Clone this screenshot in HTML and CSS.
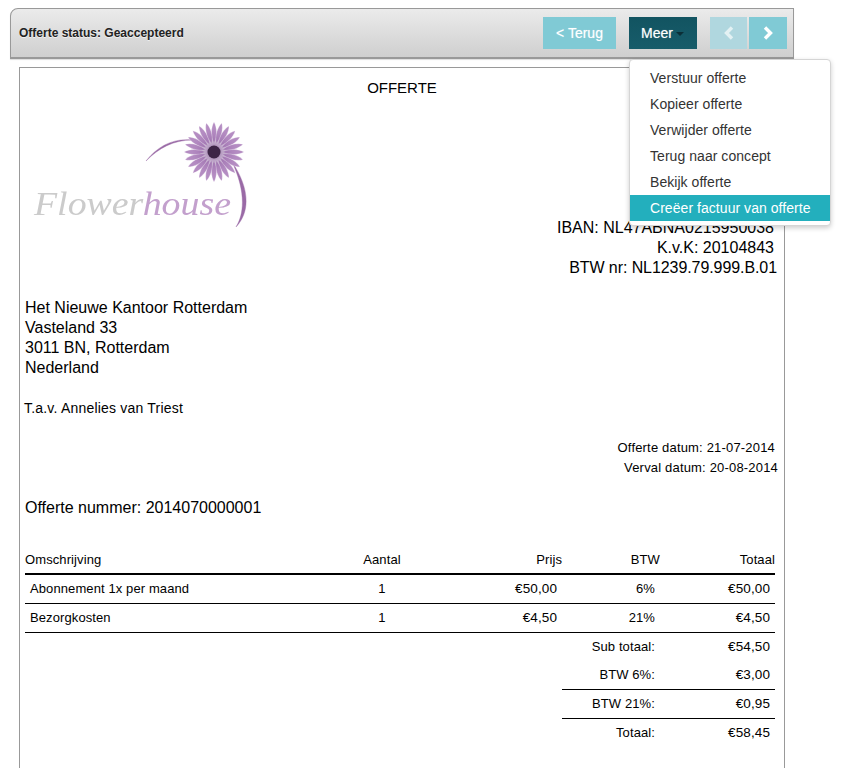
FILE: index.html
```html
<!DOCTYPE html>
<html lang="nl">
<head>
<meta charset="utf-8">
<title>Offerte</title>
<link rel="stylesheet" href="styles.css">
</head>
<body>
<header class="toolbar">
  <div class="status">Offerte status: Geaccepteerd</div>
  <div class="actions">
    <a class="btn btn-light btn-back">&lt; Terug</a>
    <div class="more">
      <a class="btn btn-dark">Meer<span class="caret"></span></a>
      <ul class="menu">
        <li>Verstuur offerte</li>
        <li>Kopieer offerte</li>
        <li>Verwijder offerte</li>
        <li>Terug naar concept</li>
        <li>Bekijk offerte</li>
        <li class="active">Creëer factuur van offerte</li>
      </ul>
    </div>
    <div class="pager">
      <a class="btn btn-light btn-page disabled"><svg width="12" height="14" viewBox="0 0 12 14"><polyline points="9,1.5 3.5,7 9,12.5" class="chev"/></svg></a>
      <a class="btn btn-light btn-page"><svg width="12" height="14" viewBox="0 0 12 14"><polyline points="3,1.5 8.5,7 3,12.5" class="chev"/></svg></a>
    </div>
  </div>
</header>
<main class="doc">
  <h1 class="title">OFFERTE</h1>
  <section class="head">
    <svg class="logo" width="230" height="130" viewBox="0 0 230 130">
      <defs>
        <g id="p"><path d="M0 -9 C-3.6 -16 -3 -25 0 -30 C3 -25 3.6 -16 0 -9Z"/></g>
        <radialGradient id="shade">
          <stop offset="0" stop-color="#6d3f82" stop-opacity=".85"/>
          <stop offset=".55" stop-color="#8d5ea0" stop-opacity=".35"/>
          <stop offset="1" stop-color="#a87bb8" stop-opacity="0"/>
        </radialGradient>
      </defs>
      <path d="M125 52 C137 37 152 29 172 31 C152 31 138 39 125 52Z" class="arc"/>
      <path d="M211 53 C228 78 230 102 215 118 C225 102 223 78 211 53Z" class="arc"/>
      <g transform="translate(193 43)">
        <g class="petals">
          <use href="#p" transform="rotate(0)"/><use href="#p" transform="rotate(15)"/><use href="#p" transform="rotate(30)"/><use href="#p" transform="rotate(45)"/><use href="#p" transform="rotate(60)"/><use href="#p" transform="rotate(75)"/><use href="#p" transform="rotate(90)"/><use href="#p" transform="rotate(105)"/><use href="#p" transform="rotate(120)"/><use href="#p" transform="rotate(135)"/><use href="#p" transform="rotate(150)"/><use href="#p" transform="rotate(165)"/><use href="#p" transform="rotate(180)"/><use href="#p" transform="rotate(195)"/><use href="#p" transform="rotate(210)"/><use href="#p" transform="rotate(225)"/><use href="#p" transform="rotate(240)"/><use href="#p" transform="rotate(255)"/><use href="#p" transform="rotate(270)"/><use href="#p" transform="rotate(285)"/><use href="#p" transform="rotate(300)"/><use href="#p" transform="rotate(315)"/><use href="#p" transform="rotate(330)"/><use href="#p" transform="rotate(345)"/>
        </g>
        <circle r="24" fill="url(#shade)"/>
        <circle r="6.5" class="eye"/>
      </g>
      <text x="13" y="106" class="wordmark" textLength="197" lengthAdjust="spacingAndGlyphs"><tspan class="w1">Flower</tspan><tspan class="w2">house</tspan></text>
    </svg>
    <div class="company">
      <div class="line">IBAN: NL47ABNA0215950038</div>
      <div class="line">K.v.K: 20104843</div>
      <div class="line line-wide">BTW nr: NL1239.79.999.B.01</div>
    </div>
  </section>
  <address class="client">
    <div>Het Nieuwe Kantoor Rotterdam</div>
    <div>Vasteland 33</div>
    <div>3011 BN, Rotterdam</div>
    <div>Nederland</div>
  </address>
  <p class="attn">T.a.v. Annelies van Triest</p>
  <div class="dates">
    <div>Offerte datum: 21-07-2014</div>
    <div class="due">Verval datum: 20-08-2014</div>
  </div>
  <p class="number">Offerte nummer: 2014070000001</p>
  <table class="items">
    <colgroup>
      <col class="c1"><col class="c2"><col class="c3"><col class="c4"><col class="c5">
    </colgroup>
    <thead>
      <tr><th class="left">Omschrijving</th><th class="center">Aantal</th><th class="right">Prijs</th><th class="right">BTW</th><th class="right">Totaal</th></tr>
    </thead>
    <tbody>
      <tr class="item"><td>Abonnement 1x per maand</td><td class="center">1</td><td class="right money">€50,00</td><td class="right">6%</td><td class="right money">€50,00</td></tr>
      <tr class="item"><td>Bezorgkosten</td><td class="center">1</td><td class="right money">€4,50</td><td class="right">21%</td><td class="right money">€4,50</td></tr>
      <tr class="sum sub"><td colspan="3"></td><td class="right">Sub totaal:</td><td class="right money">€54,50</td></tr>
      <tr class="sum ruled"><td colspan="3"></td><td class="right">BTW 6%:</td><td class="right money">€3,00</td></tr>
      <tr class="sum ruled"><td colspan="3"></td><td class="right">BTW 21%:</td><td class="right money">€0,95</td></tr>
      <tr class="sum"><td colspan="3"></td><td class="right">Totaal:</td><td class="right money">€58,45</td></tr>
    </tbody>
  </table>
</main>
</body>
</html>
```
FILE: styles.css
```css
* { box-sizing: border-box; }
html, body { margin: 0; height: 100%; overflow: hidden; }
body {
  background: #fff;
  color: #000;
  font-family: "Liberation Sans", Arial, sans-serif;
  padding: 8px 52px 0 10px;
  display: flex;
  flex-direction: column;
}
.toolbar {
  height: 51px;
  flex: none;
  display: flex;
  align-items: center;
  justify-content: space-between;
  border: 1px solid #999;
  border-bottom: 2px solid #999;
  border-radius: 8px 0 0 0;
  background: linear-gradient(#ebebeb, #cfcfcf);
  box-shadow: 0 1px 1px #ddd;
  padding: 0 6px 0 8px;
}
.status {
  font-size: 12px;
  font-weight: bold;
  color: #222;
  text-shadow: 0 1px 0 rgba(255,255,255,.6);
}
.actions { display: flex; align-items: center; gap: 13px; margin-top: -1px; }
.btn {
  height: 32px;
  display: flex;
  align-items: center;
  justify-content: center;
  color: #fff;
  font-size: 14px;
  text-shadow: 0 0 1px rgba(255,255,255,.5);
}
.btn-light { background: #80cad5; }
.btn-back { width: 73px; }
.btn-dark {
  width: 68px;
  padding-right: 1px;
  background: linear-gradient(#125461, #175c6a);
}
.caret {
  width: 0;
  height: 0;
  border-left: 4px solid transparent;
  border-right: 4px solid transparent;
  border-top: 4px solid #0b2f37;
  margin: 2px 0 0 3px;
}
.more { position: relative; }
.menu {
  position: absolute;
  left: 0;
  top: 42px;
  z-index: 5;
  width: 202px;
  height: 167px;
  margin: 0;
  padding: 5px 0 5px;
  list-style: none;
  background: #fff;
  border: 1px solid #d5d5d5;
  border-radius: 4px;
  box-shadow: 0 2px 5px rgba(0,0,0,.2);
  font-size: 14px;
  letter-spacing: 0.05px;
  color: #333;
}
.menu li { height: 26px; line-height: 26px; padding-left: 20px; white-space: nowrap; }
.menu .active { background: #23afbd; color: #fff; }
.pager { display: flex; gap: 2px; }
.btn-page { width: 37px; }
.btn-page:last-child { width: 38px; }
.disabled { background: #b0d7df; }
.chev { fill: none; stroke: #fff; stroke-width: 3.4; }
.disabled .chev { stroke: #e3f1f3; }

.doc {
  flex: 1;
  margin: 8px 9px 0 9px;
  border: 1px solid #999;
  border-bottom: 0;
  padding: 0 5px;
  min-height: 0;
}
.title {
  margin: 11px 0 0;
  font-size: 15px;
  font-weight: normal;
  text-align: center;
  line-height: 17px;
}
.head { display: flex; justify-content: space-between; align-items: flex-start; margin-top: 13px; height: 189px; }
.logo { margin-left: -4px; flex: none; filter: blur(.35px); }
.arc { fill: #9a6aa6; stroke: #9a6aa6; stroke-width: .4; }
.petals { fill: #b48cc2; stroke: #fff; stroke-width: .3; }
.eye { fill: #3d2547; }
.wordmark { font-family: "Liberation Serif", serif; font-style: italic; font-size: 34px; }
.w1 { fill: #cbcbcb; }
.w2 { fill: #c3a0cd; }
.company { margin-top: 109px; font-size: 16px; line-height: 20px; text-align: right; padding-right: 5px; }
.line-wide { margin-right: -3px; letter-spacing: -0.08px; }
.client { font-style: normal; font-size: 16px; line-height: 20px; margin-top: 0; }
.attn { font-size: 14px; letter-spacing: .2px; line-height: 20px; margin: 20px 0 0 -1px; }
.dates { font-size: 13px; letter-spacing: .18px; line-height: 20px; text-align: right; margin-top: 20px; padding-right: 4px; }
.due { margin-right: -3px; }
.number { font-size: 16px; line-height: 20px; margin: 20px 0 0; }
.items { width: 750px; border-collapse: collapse; table-layout: fixed; margin-top: 28px; font-size: 13px; letter-spacing: .1px; }
.c1 { width: 305px; } .c2 { width: 104px; } .c3 { width: 128px; } .c4 { width: 98px; } .c5 { width: 115px; }
.items th { font-weight: normal; padding: 0 0 6px; height: 28px; border-bottom: 2px solid #000; vertical-align: bottom; }
.items td { padding: 0 5px; height: 29px; }
.items .sub td { height: 28px; }
.items .money { font-size: 13.5px; }
.left { text-align: left; }
.center { text-align: center; }
.right { text-align: right; }
.item td { border-bottom: 1px solid #000; }
.sum.ruled td:nth-child(n+2) { border-bottom: 1px solid #000; }
```
